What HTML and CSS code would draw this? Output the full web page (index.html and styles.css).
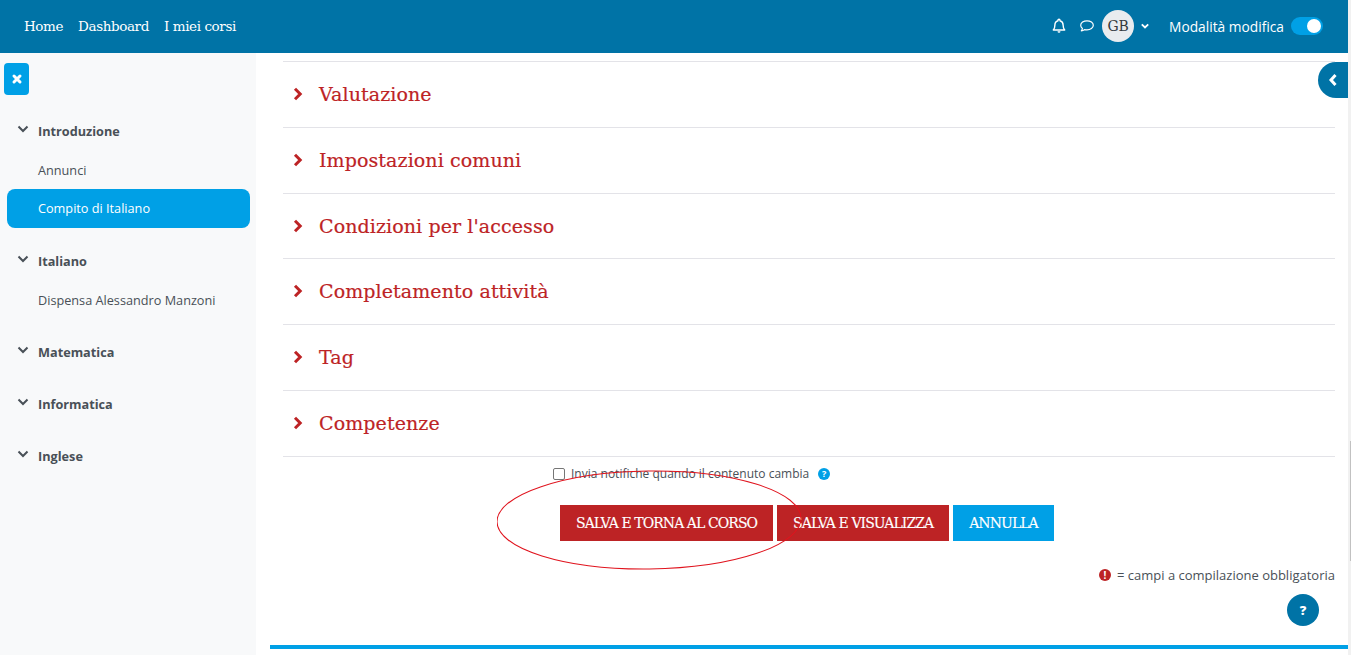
FILE: index.html
```html
<!DOCTYPE html>
<html lang="it">
<head>
<meta charset="utf-8">
<title>Compito di Italiano</title>
<link rel="stylesheet" href="styles.css">
</head>
<body>
<div class="page">
<header class="topbar">
  <nav class="topnav">
    <a>Home</a><a>Dashboard</a><a>I miei corsi</a>
  </nav>
  <div class="usernav">
    <svg class="ico-bell" viewBox="0 0 16 16" width="16" height="16"><path d="M8 1.200c-.6 0-1 .4-1 1v.5C5 3.200 3.900 4.900 3.900 7c0 3-.6 3.800-1.600 5h11.400c-1-1.200-1.600-2-1.600-5 0-2.100-1.100-3.800-3.100-4.300v-.5c0-.6-.4-1-1-1z" fill="none" stroke="#fff" stroke-width="1.400" stroke-linejoin="round"/><path d="M6.500 13.300a1.500 1.500 0 0 0 3 0z" fill="#fff"/></svg>
    <svg class="ico-chat" viewBox="0 0 16 16" width="16" height="16"><path d="M8 2.800c-3.500 0-6.300 2-6.300 4.500 0 1.200.7 2.300 1.700 3.100-.1.900-.5 1.800-1.100 2.500 1.300-.1 2.400-.6 3.200-1.300.8.200 1.600.3 2.500.3 3.500 0 6.300-2 6.300-4.600S11.500 2.800 8 2.800z" fill="none" stroke="#fff" stroke-width="1.200" stroke-linejoin="round"/></svg>
    <span class="avatar">GB</span>
    <svg class="ico-caret" viewBox="0 0 10 10" width="10" height="10"><path d="M1.800 3.300 5 6.500l3.200-3.200" fill="none" stroke="#fff" stroke-width="1.800"/></svg>
    <span class="edit-label">Modalità modifica</span>
    <span class="switch"><span class="knob"></span></span>
  </div>
</header>
<div class="layout">
  <aside class="sidebar">
    <button class="close-btn"><svg viewBox="0 0 12 12" width="12" height="12"><path d="M3 3l6 6M9 3l-6 6" stroke="#fff" stroke-width="3" stroke-linecap="round"/></svg></button>
    <ul class="tree">
      <li class="sec sec-first"><svg class="chev" viewBox="0 0 12 8" width="12" height="8"><path d="M1.500 1.500 6 6l4.500-4.500" fill="none" stroke="#495057" stroke-width="2"/></svg>Introduzione</li>
      <li class="item item-first">Annunci</li>
      <li class="item active">Compito di Italiano</li>
      <li class="sec sec-2"><svg class="chev" viewBox="0 0 12 8" width="12" height="8"><path d="M1.500 1.500 6 6l4.500-4.500" fill="none" stroke="#495057" stroke-width="2"/></svg>Italiano</li>
      <li class="item item-first">Dispensa Alessandro Manzoni</li>
      <li class="sec sec-3"><svg class="chev" viewBox="0 0 12 8" width="12" height="8"><path d="M1.500 1.500 6 6l4.500-4.500" fill="none" stroke="#495057" stroke-width="2"/></svg>Matematica</li>
      <li class="sec sec-4"><svg class="chev" viewBox="0 0 12 8" width="12" height="8"><path d="M1.500 1.500 6 6l4.500-4.500" fill="none" stroke="#495057" stroke-width="2"/></svg>Informatica</li>
      <li class="sec sec-4"><svg class="chev" viewBox="0 0 12 8" width="12" height="8"><path d="M1.500 1.500 6 6l4.500-4.500" fill="none" stroke="#495057" stroke-width="2"/></svg>Inglese</li>
    </ul>
  </aside>
  <main class="main">
    <div class="sections">
      <div class="row"><svg class="arrow" viewBox="0 0 11 14" width="11" height="14"><path d="M2 1.800 7.200 7 2 12.200" fill="none" stroke="#bd2325" stroke-width="3"/></svg><h3>Valutazione</h3></div>
      <div class="row"><svg class="arrow" viewBox="0 0 11 14" width="11" height="14"><path d="M2 1.800 7.200 7 2 12.200" fill="none" stroke="#bd2325" stroke-width="3"/></svg><h3>Impostazioni comuni</h3></div>
      <div class="row"><svg class="arrow" viewBox="0 0 11 14" width="11" height="14"><path d="M2 1.800 7.200 7 2 12.200" fill="none" stroke="#bd2325" stroke-width="3"/></svg><h3>Condizioni per l'accesso</h3></div>
      <div class="row"><svg class="arrow" viewBox="0 0 11 14" width="11" height="14"><path d="M2 1.800 7.200 7 2 12.200" fill="none" stroke="#bd2325" stroke-width="3"/></svg><h3>Completamento attività</h3></div>
      <div class="row"><svg class="arrow" viewBox="0 0 11 14" width="11" height="14"><path d="M2 1.800 7.200 7 2 12.200" fill="none" stroke="#bd2325" stroke-width="3"/></svg><h3>Tag</h3></div>
      <div class="row"><svg class="arrow" viewBox="0 0 11 14" width="11" height="14"><path d="M2 1.800 7.200 7 2 12.200" fill="none" stroke="#bd2325" stroke-width="3"/></svg><h3>Competenze</h3></div>
    </div>
    <label class="notify"><span class="check"></span>Invia notifiche quando il contenuto cambia<span class="help">?</span></label>
    <div class="actions">
      <button class="btn red">SALVA E TORNA AL CORSO</button>
      <button class="btn red">SALVA E VISUALIZZA</button>
      <button class="btn blue">ANNULLA</button>
    </div>
    <p class="required"><span class="req-ico">!</span>= campi a compilazione obbligatoria</p>
    <div class="footer-line"></div>
  </main>
</div>
</div>
<div class="scrollbar"><span class="thumb"></span></div>
<button class="drawer-toggle"><svg viewBox="0 0 10 14" width="10" height="14"><path d="M7.500 2 3 7l4.500 5" fill="none" stroke="#fff" stroke-width="3"/></svg></button>
<button class="help-float">?</button>
<svg class="annot" viewBox="0 0 310 104" width="310" height="104"><ellipse cx="152" cy="50" rx="152" ry="49" transform="rotate(-0.7 152 50)" fill="none" stroke="#e0141e" stroke-width="1"/></svg>
</body>
</html>
```
FILE: styles.css
```css
* { box-sizing: border-box; }
html, body { margin: 0; height: 100%; overflow: hidden; background: #fff; }
body { font-family: "Open Sans", "Noto Sans", sans-serif; font-size: 12.700px; color: #495057; display: flex; }
.page { width: 1348px; flex: none; }
.scrollbar { flex: 1; background: #f1f1f1; padding: 441px 0 0 2px; }
.thumb { display: block; width: 1px; height: 120px; background: #c1c1c1; }

.topbar { height: 53px; background: #0073a6; display: flex; align-items: center; justify-content: space-between; padding: 0 24px 1px; color: #fff; }
.topnav { display: flex; gap: 15px; font-family: "DejaVu Serif", serif; font-size: 13.500px; letter-spacing: -0.4px; padding-bottom: 1px; }
.usernav { display: flex; align-items: center; padding-right: 1px; }
.ico-chat { margin-left: 12px; }
.avatar { width: 32px; height: 32px; margin-left: 7px; border-radius: 50%; background: #e9ecef; color: #343a40; display: flex; align-items: center; justify-content: center; font-family: "DejaVu Serif", serif; font-size: 14px; letter-spacing: -0.3px; }
.ico-caret { margin-left: 6px; }
.edit-label { margin-left: 19px; font-size: 13.750px; }
.switch { width: 32px; height: 18px; margin-left: 7px; border-radius: 9px; background: #00a0e6; position: relative; display: block; }
.knob { position: absolute; right: 2px; top: 2px; width: 14px; height: 14px; border-radius: 50%; background: #fff; }

.layout { display: flex; height: 602px; }
.sidebar { width: 256px; flex: none; background: #f8f9fa; padding: 10px 0 0 4px; }
.close-btn { display: flex; align-items: center; justify-content: center; width: 25px; height: 32px; padding: 0; border: 0; border-radius: 4px; background: #00a0e6; }
.tree { list-style: none; margin: 0; padding: 0 6px 0 3px; }
.sec { display: flex; align-items: center; font-weight: 700; height: 20px; padding-left: 11px; color: #495057; }
.chev { flex: none; margin: -5px 9px 0 -1px; }
.sec-first { margin-top: 26px; }
.sec-2 { margin-top: 23px; }
.sec-3 { margin-top: 23px; }
.sec-4 { margin-top: 32px; }
.item { height: 39px; line-height: 39px; padding-left: 31px; border-radius: 8px; }
.item-first { margin-top: 9px; line-height: 41px; }
.active { background: #00a0e6; color: #fff; }

.main { flex: 1; padding: 8px 13px 0 27px; position: relative; }
.sections { border-top: 1px solid #e3e3e8; }
.row { height: 65.830px; border-bottom: 1px solid #e3e3e8; display: flex; align-items: center; padding-left: 10px; padding-bottom: 1px; }
.arrow { flex: none; }
.row h3 { margin: 0 0 0 15px; font-family: "DejaVu Serif", serif; font-weight: 400; font-size: 19px; color: #bd2325; letter-spacing: 0.1px; -webkit-text-stroke: 0.2px #bd2325; }

.notify { display: flex; align-items: center; height: 18px; margin: 8px 0 0 270px; font-size: 12px; }
.check { width: 12px; height: 12px; border: 1px solid #767676; border-radius: 2px; background: #fff; margin-right: 6px; }
.help { width: 12px; height: 12px; border-radius: 50%; background: #00a0e6; color: #fff; font-size: 9px; font-weight: 700; display: flex; align-items: center; justify-content: center; margin-left: 9px; }

.actions { display: flex; gap: 4px; margin: 22px 0 0 277px; }
.btn { height: 36px; padding: 0 16px; border: 0; color: #fff; font-family: "DejaVu Serif", serif; font-size: 14px; letter-spacing: -0.93px; white-space: nowrap; -webkit-text-stroke: 0.15px #fff; }
.red { background: #bd2325; }
.blue { background: #00a0e6; }

.required { display: flex; align-items: center; justify-content: flex-end; margin: 25px 0 0; font-size: 13px; height: 18px; }
.req-ico { width: 12px; height: 12px; border-radius: 50%; background: #bd2325; color: #fff; font-size: 10px; font-weight: 700; display: flex; align-items: center; justify-content: center; margin-right: 6px; }

.footer-line { position: absolute; left: 14px; right: 0; bottom: 6px; height: 4px; background: #00a0e6; }

.drawer-toggle { position: absolute; left: 1318px; top: 62px; width: 30px; height: 36px; border: 0; padding: 0; border-radius: 18px 0 0 18px; background: #0073a6; display: flex; align-items: center; justify-content: center; }
.help-float { position: absolute; left: 1287px; top: 594px; width: 32px; height: 32px; border: 0; border-radius: 50%; background: #0073a6; color: #fff; font-family: "Open Sans", sans-serif; font-size: 13px; font-weight: 800; }
.annot { position: absolute; left: 497px; top: 470px; pointer-events: none; }
```
